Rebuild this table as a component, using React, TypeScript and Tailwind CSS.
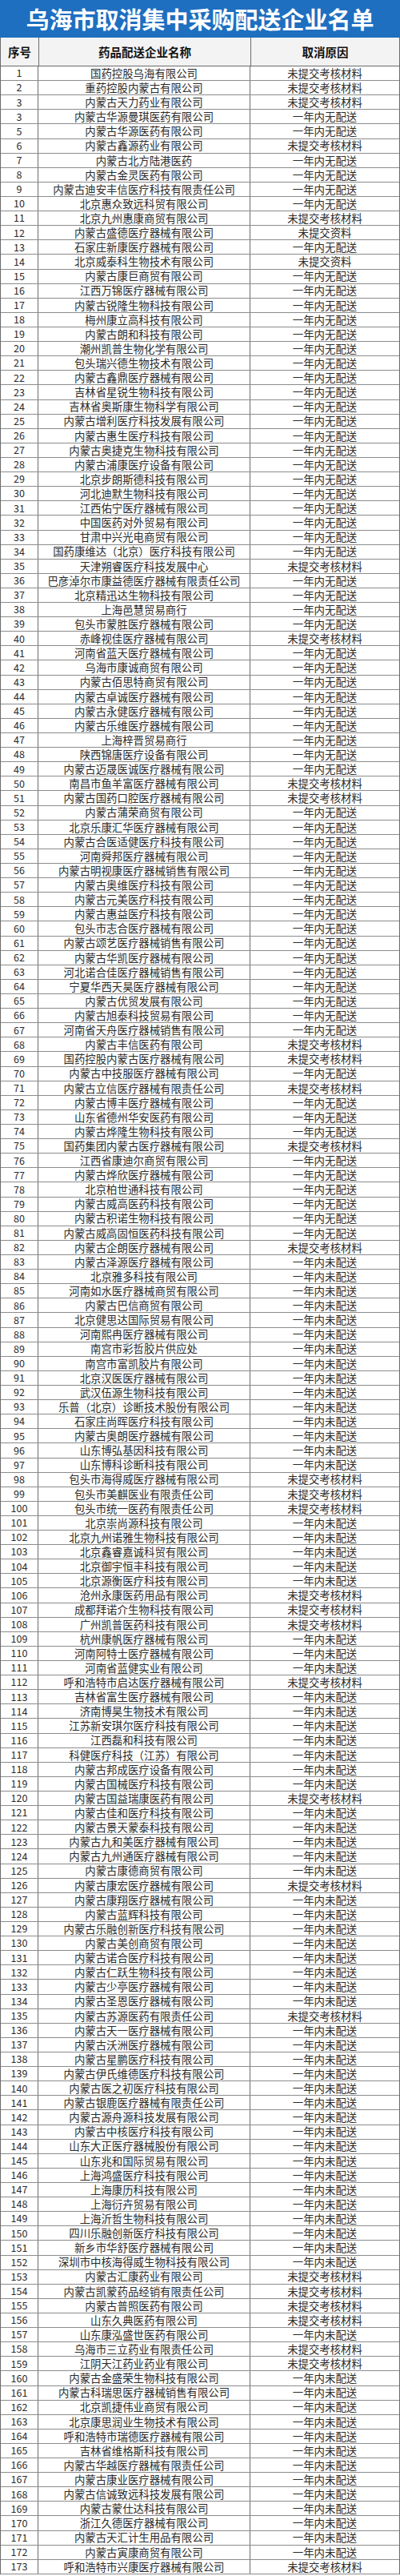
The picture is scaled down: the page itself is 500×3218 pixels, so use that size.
const A = "未提交考核材料"
const B = "一年内无配送"
const C = "未提交资料"
const D = "一年内未配送"

const rows: [string, string, string][] = [
  ["1", "国药控股乌海有限公司", A],
  ["2", "重药控股内蒙古有限公司", A],
  ["3", "内蒙古天力药业有限公司", A],
  ["3", "内蒙古华源曼琪医药有限公司", B],
  ["5", "内蒙古华源医药有限公司", B],
  ["6", "内蒙古鑫源药业有限公司", A],
  ["7", "内蒙古北方陆港医药", B],
  ["8", "内蒙古金灵医药有限公司", B],
  ["9", "内蒙古迪安丰信医疗科技有限责任公司", B],
  ["10", "北京惠众致远科贸有限公司", B],
  ["11", "北京九州惠康商贸有限公司", A],
  ["12", "内蒙古盛德医疗器械有限公司", C],
  ["13", "石家庄新康医疗器械有限公司", B],
  ["14", "北京威泰科生物技术有限公司", C],
  ["15", "内蒙古康巨商贸有限公司", B],
  ["16", "江西万锦医疗器械有限公司", B],
  ["17", "内蒙古锐隆生物科技有限公司", B],
  ["18", "梅州康立高科技有限公司", B],
  ["19", "内蒙古朗和科技有限公司", B],
  ["20", "潮州凯普生物化学有限公司", B],
  ["21", "包头瑞兴德生物技术有限公司", B],
  ["22", "内蒙古鑫鼎医疗器械有限公司", B],
  ["23", "吉林省星锐生物科技有限公司", B],
  ["24", "吉林省奥斯康生物科学有限公司", B],
  ["25", "内蒙古增利医疗科技发展有限公司", B],
  ["26", "内蒙古惠生医疗科技有限公司", B],
  ["27", "内蒙古奥捷克生物科技有限公司", B],
  ["28", "内蒙古浦康医疗设备有限公司", B],
  ["29", "北京步朗斯德科技有限公司", B],
  ["30", "河北迪默生物科技有限公司", B],
  ["31", "江西佑宁医疗器械有限公司", B],
  ["32", "中国医药对外贸易有限公司", B],
  ["33", "甘肃中兴光电商贸有限公司", B],
  ["34", "国药康维达（北京）医疗科技有限公司", B],
  ["35", "天津朔睿医疗科技发展中心", A],
  ["36", "巴彦淖尔市康益德医疗器械有限责任公司", B],
  ["37", "北京精迅达生物科技有限公司", B],
  ["38", "上海邑慧贸易商行", B],
  ["39", "包头市蒙胜医疗器械有限公司", B],
  ["40", "赤峰视佳医疗器械有限公司", A],
  ["41", "河南省蓝天医疗器械有限公司", B],
  ["42", "乌海市康诚商贸有限公司", B],
  ["43", "内蒙古佰思特商贸有限公司", B],
  ["44", "内蒙古卓诚医疗器械有限公司", B],
  ["45", "内蒙古永健医疗器械有限公司", B],
  ["46", "内蒙古乐维医疗器械有限公司", B],
  ["47", "上海梓晋贸易商行", B],
  ["48", "陕西锦唐医疗设备有限公司", B],
  ["49", "内蒙古迈晟医诚医疗器械有限公司", B],
  ["50", "南昌市鱼羊富医疗器械有限公司", A],
  ["51", "内蒙古国药口腔医疗器械有限公司", A],
  ["52", "内蒙古蒲荣商贸有限公司", B],
  ["53", "北京乐康汇华医疗器械有限公司", B],
  ["54", "内蒙古合医适健医疗科技有限公司", B],
  ["55", "河南舜邦医疗器械有限公司", B],
  ["56", "内蒙古明视康医疗器械销售有限公司", B],
  ["57", "内蒙古奥维医疗科技有限公司", B],
  ["58", "内蒙古元美医疗科技有限公司", B],
  ["59", "内蒙古惠益医疗科技有限公司", B],
  ["60", "包头市志合医疗器械有限公司", B],
  ["61", "内蒙古颂艺医疗器械销售有限公司", B],
  ["62", "内蒙古华凯医疗器械有限公司", B],
  ["63", "河北诺合佳医疗器械销售有限公司", B],
  ["64", "宁夏华西天昊医疗器械有限公司", B],
  ["65", "内蒙古优贸发展有限公司", B],
  ["66", "内蒙古旭泰科技贸易有限公司", B],
  ["67", "河南省天舟医疗器械销售有限公司", B],
  ["68", "内蒙古丰信医药有限公司", A],
  ["69", "国药控股内蒙古医疗器械有限公司", A],
  ["70", "内蒙古中技服医疗器械有限公司", B],
  ["71", "内蒙古立信医疗器械有限责任公司", A],
  ["72", "内蒙古博丰医疗器械有限公司", B],
  ["73", "山东省德州华安医药有限公司", B],
  ["74", "内蒙古烨隆生物科技有限公司", B],
  ["75", "国药集团内蒙古医疗器械有限公司", A],
  ["76", "江西省康迪尔商贸有限公司", B],
  ["77", "内蒙古烨欣医疗器械有限公司", B],
  ["78", "北京柏世通科技有限公司", B],
  ["79", "内蒙古威高医药科技有限公司", B],
  ["80", "内蒙古积诺生物科技有限公司", B],
  ["81", "内蒙古威高固恒医药科技有限公司", B],
  ["82", "内蒙古企朗医疗器械有限公司", A],
  ["83", "内蒙古泽源医疗器械有限公司", D],
  ["84", "北京雅多科技有限公司", D],
  ["85", "河南如水医疗器械商贸有限公司", D],
  ["86", "内蒙古巴信商贸有限公司", D],
  ["87", "北京健思达国际贸易有限公司", D],
  ["88", "河南熙冉医疗器械有限公司", D],
  ["89", "南宫市彩哲胶片供应处", D],
  ["90", "南宫市富凯胶片有限公司", D],
  ["91", "北京汉医医疗器械有限公司", D],
  ["92", "武汉伍源生物科技有限公司", D],
  ["93", "乐普（北京）诊断技术股份有限公司", D],
  ["94", "石家庄尚晖医疗科技有限公司", D],
  ["95", "内蒙古奥朗医疗器械有限公司", D],
  ["96", "山东博弘基因科技有限公司", D],
  ["97", "山东博科诊断科技有限公司", D],
  ["98", "包头市海得威医疗器械有限公司", A],
  ["99", "包头市美麒医业有限责任公司", A],
  ["100", "包头市统一医药有限责任公司", A],
  ["101", "北京崇尚源科技有限公司", D],
  ["102", "北京九州诺雅生物科技有限公司", D],
  ["103", "北京鑫睿嘉诚科贸有限公司", D],
  ["104", "北京御宇恒丰科技有限公司", D],
  ["105", "北京源衡医疗科技有限公司", D],
  ["106", "沧州永康医药用品有限公司", A],
  ["107", "成都拜诺介生物科技有限公司", A],
  ["108", "广州凯普医药科技有限公司", A],
  ["109", "杭州康帆医疗器械有限公司", D],
  ["110", "河南阿特士医疗器械有限公司", D],
  ["111", "河南省蓝健实业有限公司", D],
  ["112", "呼和浩特市启达医疗器械有限公司", A],
  ["113", "吉林省富生医疗器械有限公司", D],
  ["114", "济南博昊生物技术有限公司", D],
  ["115", "江苏新安琪尔医疗科技有限公司", D],
  ["116", "江西磊和科技有限公司", D],
  ["117", "科健医疗科技（江苏）有限公司", D],
  ["118", "内蒙古邦成医疗设备有限公司", D],
  ["119", "内蒙古国械医疗科技有限公司", D],
  ["120", "内蒙古国益瑞康医药有限公司", A],
  ["121", "内蒙古佳和医疗科技有限公司", D],
  ["122", "内蒙古景天蒙泰科技有限公司", D],
  ["123", "内蒙古九和美医疗器械有限公司", D],
  ["124", "内蒙古九州通医疗器械有限公司", D],
  ["125", "内蒙古康德商贸有限公司", D],
  ["126", "内蒙古康宏医疗器械有限公司", A],
  ["127", "内蒙古康翔医疗器械有限公司", D],
  ["128", "内蒙古蓝辉科技有限公司", D],
  ["129", "内蒙古乐融创新医疗科技有限公司", D],
  ["130", "内蒙古美创商贸有限公司", D],
  ["131", "内蒙古诺合医疗科技有限公司", D],
  ["132", "内蒙古仁跃生物科技有限公司", D],
  ["133", "内蒙古少亭医疗器械有限公司", D],
  ["134", "内蒙古圣恩医疗器械有限公司", D],
  ["135", "内蒙古苏源医药有限责任公司", A],
  ["136", "内蒙古天一医疗器械有限公司", D],
  ["137", "内蒙古沃洲医疗器械有限公司", D],
  ["138", "内蒙古星鹏医疗科技有限公司", D],
  ["139", "内蒙古伊氏维德医疗科技有限公司", D],
  ["140", "内蒙古医之初医疗科技有限公司", D],
  ["141", "内蒙古银鹿医疗器械有限责任公司", D],
  ["142", "内蒙古源舟源科技发展有限公司", D],
  ["143", "内蒙古中核医疗科技有限公司", D],
  ["144", "山东大正医疗器械股份有限公司", D],
  ["145", "山东兆和国际贸易有限公司", D],
  ["146", "上海鸿盛医疗科技有限公司", D],
  ["147", "上海康历科技有限公司", D],
  ["148", "上海衍卉贸易有限公司", D],
  ["149", "上海沂哲生物科技有限公司", D],
  ["150", "四川乐融创新医疗科技有限公司", D],
  ["151", "新乡市华舒医疗器械有限公司", D],
  ["152", "深圳市中核海得威生物科技有限公司", D],
  ["153", "内蒙古汇康药业有限公司", A],
  ["154", "内蒙古凯蒙药品经销有限责任公司", A],
  ["155", "内蒙古普照医药有限公司", A],
  ["156", "山东久典医药有限公司", A],
  ["157", "山东康泓盛世医药有限公司", D],
  ["158", "乌海市三立药业有限责任公司", A],
  ["159", "江阴天江药业药业有限公司", A],
  ["160", "内蒙古金盛荣生物科技有限公司", D],
  ["161", "内蒙古科瑞思医疗器械销售有限公司", D],
  ["162", "北京凯捷伟业商贸有限公司", D],
  ["163", "北京康思润业生物技术有限公司", D],
  ["164", "呼和浩特市瑞德医疗器械有限公司", D],
  ["165", "吉林省维格斯科技有限公司", D],
  ["166", "内蒙古华越医疗器械有限责任公司", D],
  ["167", "内蒙古康业医疗器械有限公司", D],
  ["168", "内蒙古信诚致远科技发展有限公司", D],
  ["169", "内蒙古蒙仕达科技有限公司", D],
  ["170", "浙江久德医疗器械有限公司", D],
  ["171", "内蒙古天汇计生用品有限公司", D],
  ["172", "内蒙古寅康商贸有限公司", D],
  ["173", "呼和浩特市兴康医疗器械有限公司", A],
]

export default function App() {
  return (
    <div
      className="w-[500px] bg-white text-[#2b2b2b]"
      style={{ fontFamily: '"Noto Sans CJK SC", "Noto Sans", sans-serif' }}
    >
      {/* title bar */}
      <div className="flex h-[47px] items-center justify-center bg-[#1e6fc0] text-[29px] font-bold leading-none tracking-[0px] text-white">
        乌海市取消集中采购配送企业名单
      </div>

      {/* header row */}
      <div className="grid h-[36px] grid-cols-[48px_265px_1fr] border-x border-b border-[#6b6b6b] bg-[#f3f3f3] text-[14.5px] font-bold text-[#111]">
        <div className="flex items-center justify-center border-r border-[#6b6b6b]">序号</div>
        <div className="flex items-center justify-center border-r border-[#6b6b6b]">药品配送企业名称</div>
        <div className="flex items-center justify-center">取消原因</div>
      </div>

      {/* body rows */}
      <div className="border-x border-[#6b6b6b] text-[13.4px] leading-none">
        {rows.map(([no, name, reason], i) => (
          <div
            key={i}
            className="grid h-[18.12px] grid-cols-[47px_265px_1fr] border-b border-[#8c8c8c]"
          >
            <div className="flex items-center justify-center border-r border-[#6b6b6b] text-[12.5px]">{no}</div>
            <div className="flex items-center justify-center whitespace-nowrap border-r border-[#6b6b6b]">{name}</div>
            <div className="flex items-center justify-center whitespace-nowrap">{reason}</div>
          </div>
        ))}
      </div>
    </div>
  )
}
